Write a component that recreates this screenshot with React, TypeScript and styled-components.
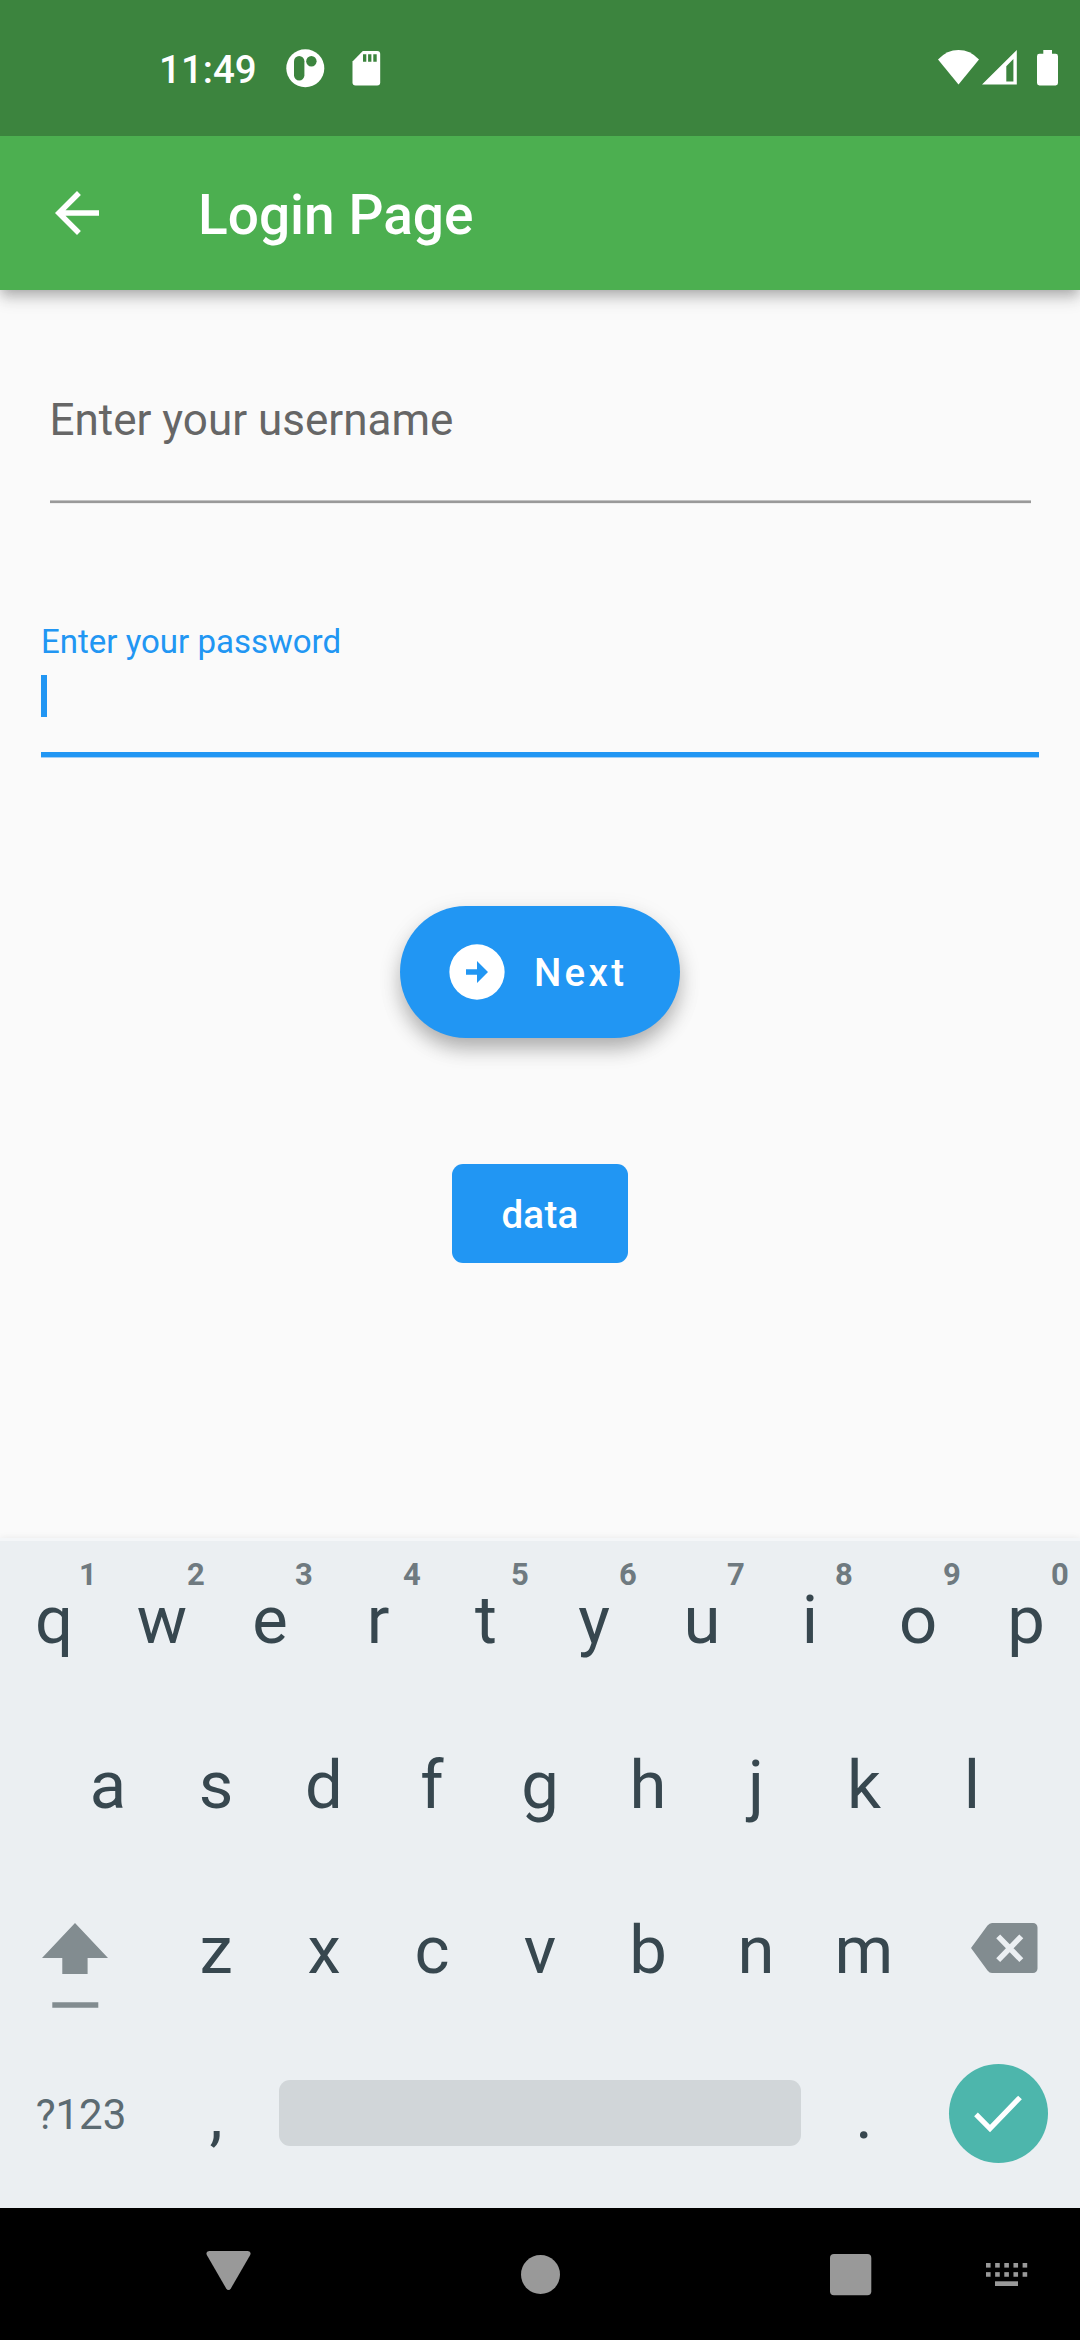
import React from "react";
import styled, { createGlobalStyle } from "styled-components";

const GlobalStyle = createGlobalStyle`
  *, *::before, *::after { box-sizing: border-box; }
  html, body { margin: 0; padding: 0; }
  body { font-family: Roboto, "Liberation Sans", sans-serif; background: #fafafa; }
  button { font-family: inherit; border: 0; padding: 0; margin: 0; }
  svg { display: block; flex: none; }
`;

const Screen = styled.div`
  display: flex;
  flex-direction: column;
  width: 1080px;
  height: 2340px;
  overflow: hidden;
  background: #fafafa;
`;

const StatusBar = styled.header`
  display: flex;
  align-items: center;
  justify-content: space-between;
  flex: none;
  height: 136px;
  padding: 0 20px 0 159px;
  background: #3c843e;
  color: #fff;
  z-index: 2;
`;

const StatusGroup = styled.div`
  display: flex;
  align-items: center;
`;

const Clock = styled.span`
  width: 127px;
  font-size: 38.5px;
  font-weight: 500;
  line-height: 46px;
  padding-top: 3px;
`;

const AppBar = styled.div`
  display: flex;
  align-items: center;
  flex: none;
  height: 154px;
  padding-left: 44px;
  background: #4caf50;
  color: #fff;
  box-shadow: 0 5px 11px -2px rgba(0, 0, 0, 0.2), 0 11px 14px rgba(0, 0, 0, 0.11),
    0 3px 18px rgba(0, 0, 0, 0.08);
  z-index: 1;
`;

const Title = styled.h1`
  margin: 4px 0 0 88px;
  font-size: 55px;
  font-weight: 500;
  line-height: 66px;
`;

const Form = styled.main`
  display: flex;
  flex-direction: column;
  align-items: center;
  flex: 1;
`;

const UsernameField = styled.label`
  width: 981px;
  height: 113px;
  margin-top: 100px;
  padding-top: 4px;
  border-bottom: 2px solid #999;
  box-shadow: inset 0 -1px #c2c2c2, 0 1px #eee;
  color: #666;
  font-size: 44px;
  line-height: 52px;
`;

const PasswordField = styled.label`
  display: flex;
  flex-direction: column;
  width: 998px;
  height: 137px;
  margin-top: 117px;
  border-bottom: 5px solid #2196f3;
  box-shadow: 0 1px #a0cff8;
  color: #2196f3;
  font-size: 33px;
  line-height: 44px;
`;

const Caret = styled.span`
  width: 6px;
  height: 42px;
  margin-top: 11px;
  background: #2196f3;
`;

const NextButton = styled.button`
  display: flex;
  align-items: center;
  width: 280px;
  height: 132px;
  margin-top: 149px;
  padding-left: 44px;
  gap: 24px;
  border-radius: 66px;
  background: #2196f3;
  color: #fff;
  font-size: 38.5px;
  font-weight: 500;
  letter-spacing: 3.3px;
  box-shadow: 0 12px 20px -2px rgba(0, 0, 0, 0.25), 0 7px 24px rgba(0, 0, 0, 0.1);
`;

const DataButton = styled.button`
  width: 176px;
  height: 99px;
  margin-top: 126px;
  padding-top: 2px;
  border-radius: 11px;
  background: #2196f3;
  color: #fff;
  font-size: 38.5px;
  font-weight: 500;
  letter-spacing: 0.3px;
`;

const Keyboard = styled.section`
  flex: none;
  height: 670px;
  background: #ebeff2;
  box-shadow: inset 0 3px #f4f6f8, 0 0 7px rgba(0, 0, 0, 0.07);
`;

const KeyRow = styled.div<{ $inset?: number }>`
  display: flex;
  height: 165px;
  padding: 0 ${(p) => p.$inset ?? 0}px;
`;

const Key = styled.div<{ $width?: number }>`
  position: relative;
  display: flex;
  align-items: center;
  justify-content: center;
  flex: none;
  width: ${(p) => p.$width ?? 108}px;
  height: 165px;
  padding-bottom: 2px;
  color: #37474f;
  font-size: 67px;
  line-height: 80px;
`;

const IconKey = styled(Key)`
  padding-bottom: 5px;
`;

const Hint = styled.span`
  position: absolute;
  top: 17px;
  left: 68px;
  width: 40px;
  color: #6f7a80;
  font-size: 31px;
  font-weight: 700;
  line-height: 40px;
  text-align: center;
`;

const SymbolsLabel = styled.span`
  color: #5c6b72;
  font-size: 42px;
  line-height: 50px;
`;

const SpaceBar = styled.div`
  width: 522px;
  height: 66px;
  border-radius: 11px;
  background: #d1d6d9;
`;

const EnterKey = styled.div`
  display: flex;
  align-items: center;
  justify-content: center;
  width: 99px;
  height: 99px;
  margin-right: 2px;
  border-radius: 50%;
  background: #4db6ac;
`;

const ShiftGlyph = styled.svg`
  margin: 35px 12px 0 0;
`;

const DeleteGlyph = styled.svg`
  margin-left: 10px;
`;

const NavBar = styled.nav`
  display: flex;
  align-items: flex-start;
  flex: none;
  height: 132px;
  padding-left: 206px;
  background: #000;
`;

const NavItem = styled.div<{ $left?: number; $top: number }>`
  margin-left: ${(p) => p.$left ?? 0}px;
  margin-top: ${(p) => p.$top}px;
`;

const NotificationIcons = () => (
  <svg width="96" height="40" viewBox="286 48 96 40" fill="#fff">
    <circle cx="305.3" cy="68.2" r="19" />
    <rect x="294" y="56" width="10.4" height="24.4" rx="5.2" fill="#3c843e" />
    <circle cx="311.4" cy="61.3" r="5.2" fill="#3c843e" />
    <path d="M362.8 51H377.2a3 3 0 0 1 3 3V82.4a3 3 0 0 1-3 3H355.5a3 3 0 0 1-3-3V61.5Z" />
    <path fill="#3c843e" d="M363 54.3h3.3v7.4H363zM368.1 54.3h3.3v7.4h-3.3zM373.3 54.3h3.4v7.4h-3.4z" />
  </svg>
);

const SystemIcons = () => (
  <svg width="122" height="38" viewBox="938 49 122 38" fill="#fff">
    <path d="M958.5 84.5 938 59.4Q947 50 958.5 50T979 59.4Z" />
    <path fillRule="evenodd" d="M982 84.6 1016.8 50V84.6ZM1006.3 66.2V81.4H1013.4V59Z" />
    <path d="M1043.3 50H1052V53.8H1055.6a2.4 2.4 0 0 1 2.4 2.4V83a2.4 2.4 0 0 1-2.4 2.4H1039.4A2.4 2.4 0 0 1 1037 83V56.2a2.4 2.4 0 0 1 2.4-2.4H1043.3Z" />
  </svg>
);

const BackIcon = () => (
  <svg width="66" height="66" viewBox="0 0 24 24" fill="#fff">
    <path d="M20 11H7.83l5.59-5.59L12 4l-8 8 8 8 1.41-1.41L7.83 13H20v-2z" />
  </svg>
);

const NextIcon = () => (
  <svg width="66" height="66" viewBox="0 0 24 24" fill="#fff">
    <path
      fillRule="evenodd"
      d="M12 1.95a10.05 10.05 0 1 0 0 20.1 10.05 10.05 0 0 0 0-20.1ZM12 16v-3H8v-2h4V8l4 4-4 4Z"
    />
  </svg>
);

const ShiftIcon = () => (
  <ShiftGlyph width="66" height="85" viewBox="0 0 66 85" fill="#828c90">
    <path d="M33 0 66 35H45.6V51H20.3V35H0Z" />
    <path d="M10.3 79.3H56.3V84.8H10.3z" />
  </ShiftGlyph>
);

const DeleteIcon = () => (
  <DeleteGlyph width="67" height="50" viewBox="0 0 67 50">
    <path
      fill="#828c90"
      d="M21 0H62a4.5 4.5 0 0 1 4.5 4.5V45.5A4.5 4.5 0 0 1 62 50H21Q18.5 50 16.5 47.5L0 25 16.5 2.5Q18.5 0 21 0Z"
    />
    <path fill="none" stroke="#ebeff2" strokeWidth="5.5" d="M27.2 13.3 50.3 37.1M50.3 13.3 27.2 37.1" />
  </DeleteGlyph>
);

const CheckIcon = () => (
  <svg width="50" height="40" viewBox="0 0 50 40">
    <path fill="none" stroke="#fff" strokeWidth="5.2" d="M3 21.3 17 35.5 47 4.5" />
  </svg>
);

const Letters = ({ keys }: { keys: string }) => (
  <>
    {keys.split("").map((k) => (
      <Key key={k}>{k}</Key>
    ))}
  </>
);

const TOP_ROW = "qwertyuiop".split("");

export default function App() {
  return (
    <>
      <GlobalStyle />
      <Screen>
        <StatusBar>
          <StatusGroup>
            <Clock>11:49</Clock>
            <NotificationIcons />
          </StatusGroup>
          <SystemIcons />
        </StatusBar>
        <AppBar>
          <BackIcon />
          <Title>Login Page</Title>
        </AppBar>
        <Form>
          <UsernameField>Enter your username</UsernameField>
          <PasswordField>
            Enter your password
            <Caret />
          </PasswordField>
          <NextButton>
            <NextIcon />
            Next
          </NextButton>
          <DataButton>data</DataButton>
        </Form>
        <Keyboard>
          <KeyRow>
            {TOP_ROW.map((k, i) => (
              <Key key={k}>
                {k}
                <Hint>{(i + 1) % 10}</Hint>
              </Key>
            ))}
          </KeyRow>
          <KeyRow $inset={54}>
            <Letters keys="asdfghjkl" />
          </KeyRow>
          <KeyRow>
            <IconKey $width={162}>
              <ShiftIcon />
            </IconKey>
            <Letters keys="zxcvbnm" />
            <IconKey $width={162}>
              <DeleteIcon />
            </IconKey>
          </KeyRow>
          <KeyRow>
            <Key $width={162}>
              <SymbolsLabel>?123</SymbolsLabel>
            </Key>
            <Key>,</Key>
            <IconKey $width={540}>
              <SpaceBar />
            </IconKey>
            <Key>.</Key>
            <IconKey $width={162}>
              <EnterKey>
                <CheckIcon />
              </EnterKey>
            </IconKey>
          </KeyRow>
        </Keyboard>
        <NavBar>
          <NavItem $top={43}>
            <svg width="45" height="40" viewBox="0 0 45 40" fill="#999">
              <path d="M3.2 0H41.8Q45.6.6 44.2 4L25 37.2Q22.5 41 20 37.2L.8 4Q-.6.6 3.2 0Z" />
            </svg>
          </NavItem>
          <NavItem $left={270} $top={47}>
            <svg width="39" height="39" viewBox="0 0 39 39" fill="#999">
              <circle cx="19.5" cy="19.5" r="19.5" />
            </svg>
          </NavItem>
          <NavItem $left={270} $top={46}>
            <svg width="42" height="42" viewBox="0 0 42 42" fill="#999">
              <rect width="41.3" height="41.3" rx="4" />
            </svg>
          </NavItem>
          <NavItem $left={114} $top={55}>
            <svg width="42" height="24" viewBox="0 0 42 24" fill="#999">
              {[0, 9.15].map((y) =>
                [0, 9.15, 18.3, 27.45, 36.6].map((x) => (
                  <rect key={`${x}-${y}`} x={x} y={y} width="4.6" height="4.6" />
                ))
              )}
              <rect x="9" y="18.3" width="23" height="4.7" />
            </svg>
          </NavItem>
        </NavBar>
      </Screen>
    </>
  );
}
